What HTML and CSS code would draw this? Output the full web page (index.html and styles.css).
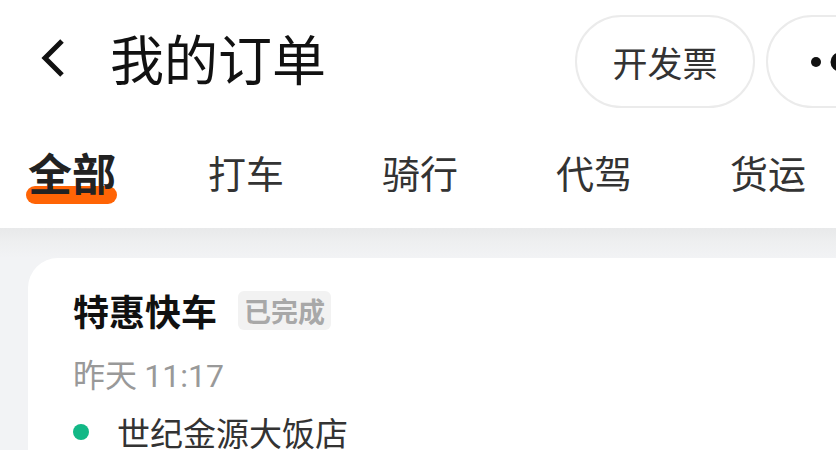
FILE: index.html
```html
<!DOCTYPE html>
<html lang="zh-CN">
<head>
  <meta charset="UTF-8">
  <title>我的订单</title>
  <meta name="viewport" content="width=device-width, initial-scale=1">
  <link rel="stylesheet" href="styles.css">
</head>
<body>
  <div class="topbar">
    <div class="back">
      <svg width="26" height="40" viewBox="0 0 26 40"><path d="M22 3 L5 20 L22 37" fill="none" stroke="#111" stroke-width="5"/></svg>
    </div>
    <h1 class="title">我的订单</h1>
    <div class="actions">
      <button class="pill">开发票</button>
      <button class="pill more">
        <svg width="80" height="30" viewBox="0 0 80 30"><circle cx="48" cy="15" r="5" fill="#111"/><circle cx="72" cy="15" r="9.5" fill="#111"/></svg>
      </button>
    </div>
  </div>

  <div class="tabs">
    <div class="tab active"><span>全部</span></div>
    <div class="tab"><span>打车</span></div>
    <div class="tab"><span>骑行</span></div>
    <div class="tab"><span>代驾</span></div>
    <div class="tab"><span>货运</span></div>
  </div>

  <div class="content">
    <div class="card">
      <div class="card-head">
        <span class="kind">特惠快车</span>
        <span class="badge">已完成</span>
      </div>
      <div class="time">昨天 <span class="num">11:17</span></div>
      <div class="place"><i class="dot"></i>世纪金源大饭店</div>
    </div>
  </div>
</body>
</html>
```

FILE: styles.css
```css
body { margin: 0; padding: 0; background: #f2f3f5; font-family: "Noto Sans CJK SC", "Noto Sans", sans-serif; overflow: hidden; }
.topbar { background: #fff; height: 123px; display: flex; align-items: center; overflow: hidden; }
.back { width: 26px; height: 40px; margin: -8px 0 0 40px; }
.back svg { display: block; }
.title { margin: -8px 0 0 44px; font-size: 54px; font-weight: 400; color: #111; line-height: 1; }
.actions { margin-left: auto; display: flex; gap: 11px; margin-right: -80px; }
.pill { height: 93px; width: 180px; border: 2px solid #ebebeb; border-radius: 47px; background: #fff; font-family: inherit; font-size: 35px; color: #333; padding: 0; }
.pill.more { width: 150px; }
.pill.more svg { display: block; }

.tabs { background: #fff; height: 105px; display: flex; align-items: center; overflow: hidden; }
.tab { width: 174px; flex: none; text-align: center; font-size: 38px; color: #333; line-height: 1; padding-bottom: 8px; }
.tab:first-child { margin-left: -15px; }
.tab span { position: relative; z-index: 0; display: inline-block; }
.tab.active { font-size: 44px; font-weight: 700; color: #222; }
.tab.active span::after { content: ""; position: absolute; z-index: -1; left: -2px; right: -1px; top: 36px; height: 18px; border-radius: 9px; background: #ff6405; }

.content { background: linear-gradient(#e8e9ea 0, #eeeff0 14px, #f2f3f5 30px); padding-top: 30px; height: 192px; overflow: hidden; }
.card { background: #fff; border-radius: 30px; margin: 0 -40px 0 28px; padding: 31px 45px 0; height: 300px; }
.card-head { display: flex; align-items: center; gap: 21px; }
.kind { font-size: 36px; font-weight: 700; color: #111; line-height: 1.2; }
.badge { font-size: 27px; color: #a8a8a8; background: #f2f2f2; border-radius: 6px; padding: 1px 6px; line-height: 37px; font-weight: 700; }
.time { margin-top: 22px; font-size: 32px; color: #999; line-height: 1.2; }
.time .num { font-family: Roboto, "Noto Sans", sans-serif; }
.place { margin-top: 17px; font-size: 33px; color: #333; line-height: 1.2; display: flex; align-items: center; }
.dot { width: 16px; height: 16px; border-radius: 50%; background: #12b886; margin: 0 28px 0 0; }
```
